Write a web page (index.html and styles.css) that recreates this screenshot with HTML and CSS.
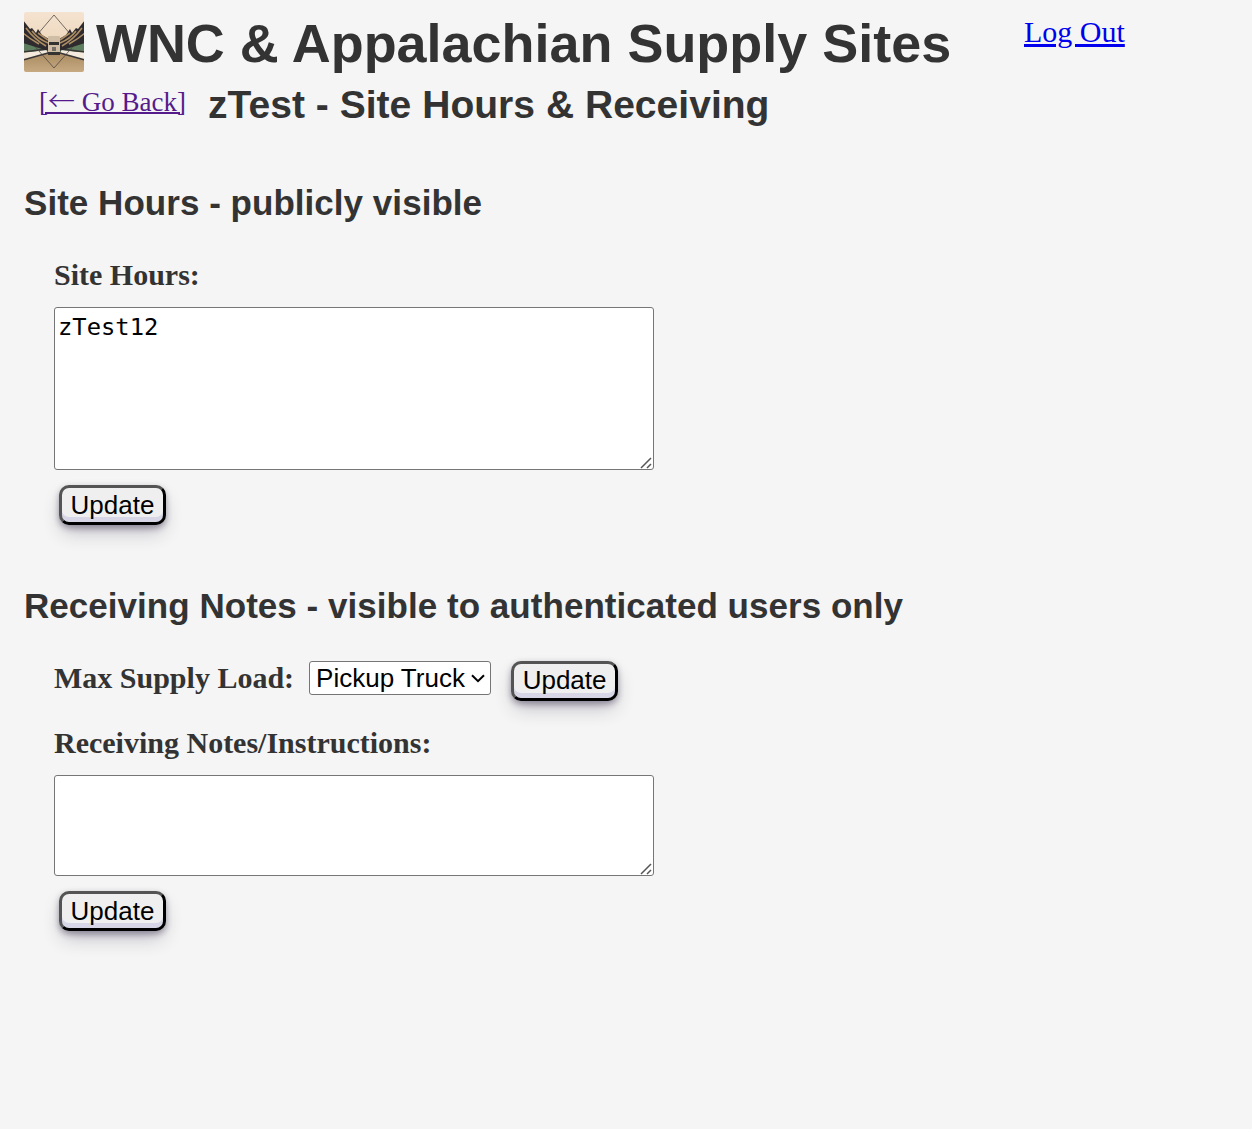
FILE: index.html
```html
<!DOCTYPE html>
<html lang="en">
<head>
<meta charset="utf-8">
<title>Site Hours &amp; Receiving</title>
<link rel="stylesheet" href="styles.css">
</head>
<body>
<header class="banner">
  <svg class="logo" viewBox="0 0 60 60" aria-hidden="true">
    <defs>
      <linearGradient id="sky" x2="0" y2="1"><stop stop-color="#f5e4d2"/><stop offset="1" stop-color="#e6cba9"/></linearGradient>
      <linearGradient id="road" x2="0" y2="1"><stop stop-color="#a98961"/><stop offset="1" stop-color="#c9ad84"/></linearGradient>
      <filter id="soft"><feGaussianBlur stdDeviation=".6"/></filter>
      <clipPath id="edge"><rect width="60" height="60" rx="2"/></clipPath>
    </defs>
    <g clip-path="url(#edge)"><g filter="url(#soft)">
      <rect x="-2" y="-2" width="64" height="64" fill="url(#sky)"/>
      <path d="M-2 28L24 34V40L-2 40ZM62 28L36 34V40L62 40Z" fill="#5f7d5f"/>
      <path d="M-2 48L24 40H36L62 48V62H-2Z" fill="url(#road)"/>
      <path d="M-2 41L23 38V41L-2 48ZM62 41L37 38V41L62 48Z" fill="#f3e9dc"/>
      <path d="M-1 40L23 37M61 40L37 37M-1 48L24 41M61 48L36 41" stroke="#383536" stroke-width="1.5"/>
      <path d="M30 3L53 30L30 56L7 30Z" fill="none" stroke="#4b443f" stroke-width=".9" opacity=".85"/>
      <path d="M-1 8L6 17L8 16L12 21L14 17L18 23L25 27V39L18 37L-1 31ZM61 8L54 17L52 16L48 21L46 17L42 23L35 27V39L42 37L61 31Z" fill="#2d2b2e"/>
      <path d="M2 16Q10 27 22 34M-1 21Q6 27 15 32M8 19Q14 27 24 31M14 21L24 28M58 16Q50 27 38 34M61 21Q54 27 45 32M52 19Q46 27 36 31M46 21L36 28" fill="none" stroke="#ad8d64" stroke-width="1.6"/>
      <rect x="24" y="24" width="12" height="19" rx="1" fill="#d0bda6"/>
      <path d="M25 30H35V33H25ZM24 40H36V43H24Z" fill="#353233"/>
      <path d="M28 35H32V39H28Z" fill="#777069"/>
    </g></g>
  </svg>
  <h1 class="site-title">WNC &amp; Appalachian Supply Sites</h1>
  <a class="logout" href="#">Log Out</a>
</header>
<nav class="page-heading">
  <a class="back" href="#">[<span class="arrow">←</span> Go Back]</a>
  <h2 class="page-title">zTest - Site Hours &amp; Receiving</h2>
</nav>
<main>
  <section class="section hours">
    <h3 class="section-title">Site Hours - publicly visible</h3>
    <div class="fields">
      <label class="label" for="hours">Site Hours:</label>
      <div class="text-box">
        <textarea class="text text-hours" id="hours" spellcheck="false">zTest12</textarea>
        <svg class="grip" viewBox="0 0 12 12" aria-hidden="true"><path d="M1 11L11 1M7 11L11 7"/></svg>
      </div>
      <button class="update">Update</button>
    </div>
  </section>
  <section class="section">
    <h3 class="section-title">Receiving Notes - visible to authenticated users only</h3>
    <div class="fields">
      <div class="load-row">
        <label class="label" for="load">Max Supply Load:</label>
        <div class="load-box">
          <select class="load" id="load"><option>Pickup Truck</option></select>
          <svg class="chevron" viewBox="0 0 14 9" aria-hidden="true"><path d="M1 1.2L7 7.2L13 1.2"/></svg>
        </div>
        <button class="update">Update</button>
      </div>
      <label class="label" for="notes">Receiving Notes/Instructions:</label>
      <div class="text-box">
        <textarea class="text text-notes" id="notes"></textarea>
        <svg class="grip" viewBox="0 0 12 12" aria-hidden="true"><path d="M1 11L11 1M7 11L11 7"/></svg>
      </div>
      <button class="update">Update</button>
    </div>
  </section>
</main>
</body>
</html>
```
FILE: styles.css
```css
* { box-sizing: border-box; }
body {
  min-height: 100vh;
  margin: 0;
  padding: 12px 24px;
  background: #f5f5f5;
  color: #333;
  font-family: "Liberation Serif", serif;
  font-size: 30px;
}
h1, h2, h3 {
  margin: 0;
  font-family: "Liberation Sans", sans-serif;
  font-weight: bold;
  white-space: nowrap;
}
.banner { display: flex; height: 60px; }
.logo { width: 60px; height: 60px; margin-right: 12px; }
.site-title { width: 928px; font-size: 53.95px; line-height: 62px; }
.logout { color: #0000ee; line-height: 40px; text-decoration-thickness: 3px; }
.page-heading { display: flex; height: 64px; padding-left: 15px; }
.back { width: 169px; color: #551a8b; font-size: 27px; line-height: 60px; white-space: nowrap; text-decoration-thickness: 2px; }
.arrow { font-family: "Noto Sans CJK JP", sans-serif; font-weight: 300; line-height: 1; }
.page-title { font-size: 39px; line-height: 65px; letter-spacing: .03px; }
.section-title { font-size: 35px; line-height: 40px; letter-spacing: .035px; }
.section { padding-top: 47px; }
.hours { height: 403px; }
.fields { display: flex; flex-direction: column; align-items: flex-start; padding: 34px 0 0 30px; }
.label { font-weight: bold; line-height: 36px; }
.text-box { position: relative; margin: 14px 0 15px; }
.text {
  display: block;
  width: 600px;
  padding: 4px 4px 4px 3px;
  border: 1px solid #767676;
  border-radius: 3px;
  background: #fff;
  color: #000;
  font: 23.8px/30px "DejaVu Sans Mono", monospace;
  resize: none;
}
.text-hours { height: 163px; }
.text-notes { height: 101px; }
.grip {
  position: absolute;
  right: 2px;
  bottom: 1px;
  width: 12px;
  height: 12px;
  fill: none;
  stroke: #555;
  stroke-width: 1.5;
}
.update {
  width: 107px;
  height: 40px;
  margin-left: 5px;
  padding: 0;
  border: 3px outset #000;
  border-radius: 10px;
  background: #efefef;
  box-shadow: rgba(45, 35, 66, .4) 0 3px 6px, rgba(45, 35, 66, .3) 0 10px 19px -4px, #d6d6e7 0 -5px 0 inset;
  color: #000;
  font: 26px "Liberation Sans", sans-serif;
}
.load-row { display: flex; height: 65px; }
.load-row .update { margin-top: 1px; padding-bottom: 2px; }
.load-box { position: relative; height: 34px; margin: 1px 15px 0; }
.load {
  display: block;
  width: 182px;
  height: 34px;
  padding: 0 6px;
  border: 1px solid #767676;
  border-radius: 3px;
  background: #fff;
  color: #000;
  font: 26px "Liberation Sans", sans-serif;
  appearance: none;
}
.chevron {
  position: absolute;
  right: 6px;
  top: 13px;
  width: 14px;
  height: 9px;
  fill: none;
  stroke: #000;
  stroke-width: 2;
}
```
